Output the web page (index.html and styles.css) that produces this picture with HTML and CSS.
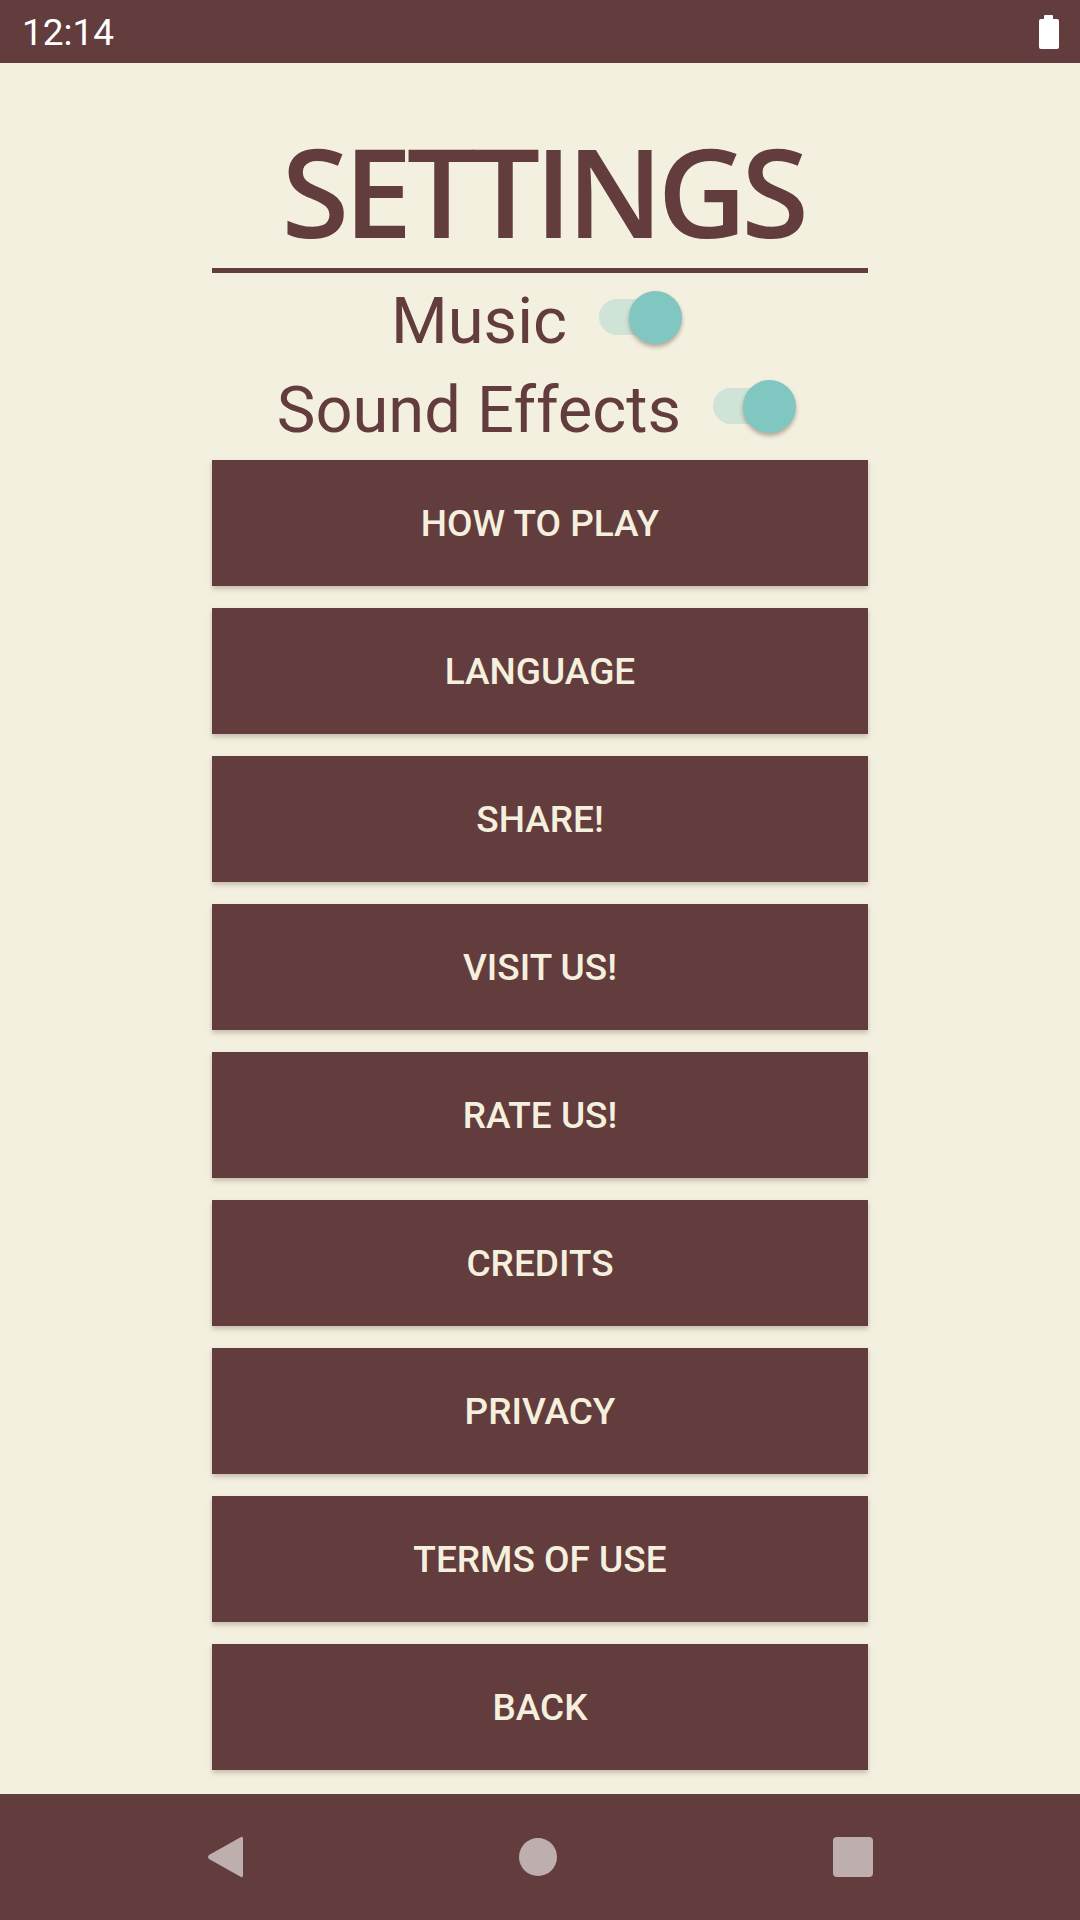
FILE: index.html
```html
<!DOCTYPE html>
<html>
<head>
<meta charset="utf-8">
<link rel="stylesheet" href="styles.css">
</head>
<body>
<div class="screen">
  <div class="status-bar">
    <span class="time">12:14</span>
    <svg class="battery" width="20" height="34" viewBox="0 0 20 34">
      <rect x="5" y="0" width="9" height="5" rx="1" fill="#ffffff"/>
      <rect x="0" y="4" width="20" height="30" rx="2" fill="#ffffff"/>
    </svg>
  </div>
  <main class="content">
    <h1 class="title">SETTINGS</h1>
    <div class="rule"></div>
    <div class="toggles">
      <div class="toggle-row">
        <span class="toggle-label">Music</span>
        <span class="switch"><span class="track"></span><span class="thumb"></span></span>
      </div>
      <div class="toggle-row">
        <span class="toggle-label">Sound Effects</span>
        <span class="switch"><span class="track"></span><span class="thumb"></span></span>
      </div>
    </div>
    <div class="buttons">
      <div class="btn">HOW TO PLAY</div>
      <div class="btn">LANGUAGE</div>
      <div class="btn">SHARE!</div>
      <div class="btn">VISIT US!</div>
      <div class="btn">RATE US!</div>
      <div class="btn">CREDITS</div>
      <div class="btn">PRIVACY</div>
      <div class="btn">TERMS OF USE</div>
      <div class="btn">BACK</div>
    </div>
  </main>
  <div class="nav-bar">
    <svg class="nav-back" width="36" height="42" viewBox="0 0 36 42">
      <path d="M34 1 Q36 0 36 3 L36 39 Q36 42 34 41 L2 23 Q0 21 2 19 Z" fill="#bfaeae"/>
    </svg>
    <span class="nav-home"></span>
    <span class="nav-recent"></span>
  </div>
</div>
</body>
</html>
```
FILE: styles.css
```css
* { box-sizing: border-box; }
html, body { margin: 0; padding: 0; }
body {
  width: 1080px;
  height: 1920px;
  background: #f4f0df;
  font-family: Roboto, "Liberation Sans", sans-serif;
  overflow: hidden;
}
.screen {
  width: 1080px;
  height: 1920px;
  display: flex;
  flex-direction: column;
}
.status-bar {
  height: 63px;
  background: #633c3d;
  display: flex;
  align-items: center;
  justify-content: space-between;
  padding: 0 21px 0 22px;
  flex-shrink: 0;
}
.time {
  color: #ffffff;
  font-size: 37px;
  line-height: 37px;
  margin-top: 2px;
}
.battery { margin-top: 1px; }
.content {
  flex: 1;
  display: flex;
  flex-direction: column;
  align-items: center;
}
.title {
  margin: 66px 0 0 0;
  padding-left: 5px;
  font-family: "Open Sans", "Noto Sans", sans-serif;
  font-weight: 650;
  font-size: 123px;
  line-height: 123px;
  color: #633c3d;
  letter-spacing: -5.5px;
}
.rule {
  width: 656px;
  height: 5px;
  background: #633c3d;
  margin-top: 16px;
}
.toggles {
  margin-top: 4px;
  display: flex;
  flex-direction: column;
  align-items: center;
}
.toggle-row {
  height: 89px;
  display: flex;
  align-items: center;
  gap: 32px;
}
.toggle-label {
  font-size: 65px;
  line-height: 89px;
  color: #633c3d;
}
.switch {
  position: relative;
  width: 83px;
  height: 53px;
  margin-right: 7px;
  margin-bottom: 9px;
}
.track {
  position: absolute;
  left: 0;
  top: 8px;
  width: 72px;
  height: 36px;
  border-radius: 18px;
  background: #cfe3d6;
}
.thumb {
  position: absolute;
  right: 0;
  top: 0;
  width: 53px;
  height: 53px;
  border-radius: 50%;
  background: #80c7c1;
  box-shadow: 0 3px 4px rgba(60, 40, 30, 0.35);
}
.buttons {
  margin-top: 5px;
  display: flex;
  flex-direction: column;
  gap: 22px;
}
.btn {
  width: 656px;
  height: 126px;
  background: #633c3d;
  color: #f5f0de;
  font-weight: 500;
  font-size: 37px;
  display: flex;
  align-items: center;
  justify-content: center;
  box-shadow: 0 3px 5px rgba(60, 40, 30, 0.25);
}
.nav-bar {
  height: 126px;
  background: #633c3d;
  display: flex;
  align-items: center;
  justify-content: center;
  gap: 276px;
  flex-shrink: 0;
}
.nav-home {
  width: 38px;
  height: 38px;
  border-radius: 50%;
  background: #bfaeae;
}
.nav-recent {
  width: 40px;
  height: 40px;
  border-radius: 4px;
  background: #bfaeae;
}
```
